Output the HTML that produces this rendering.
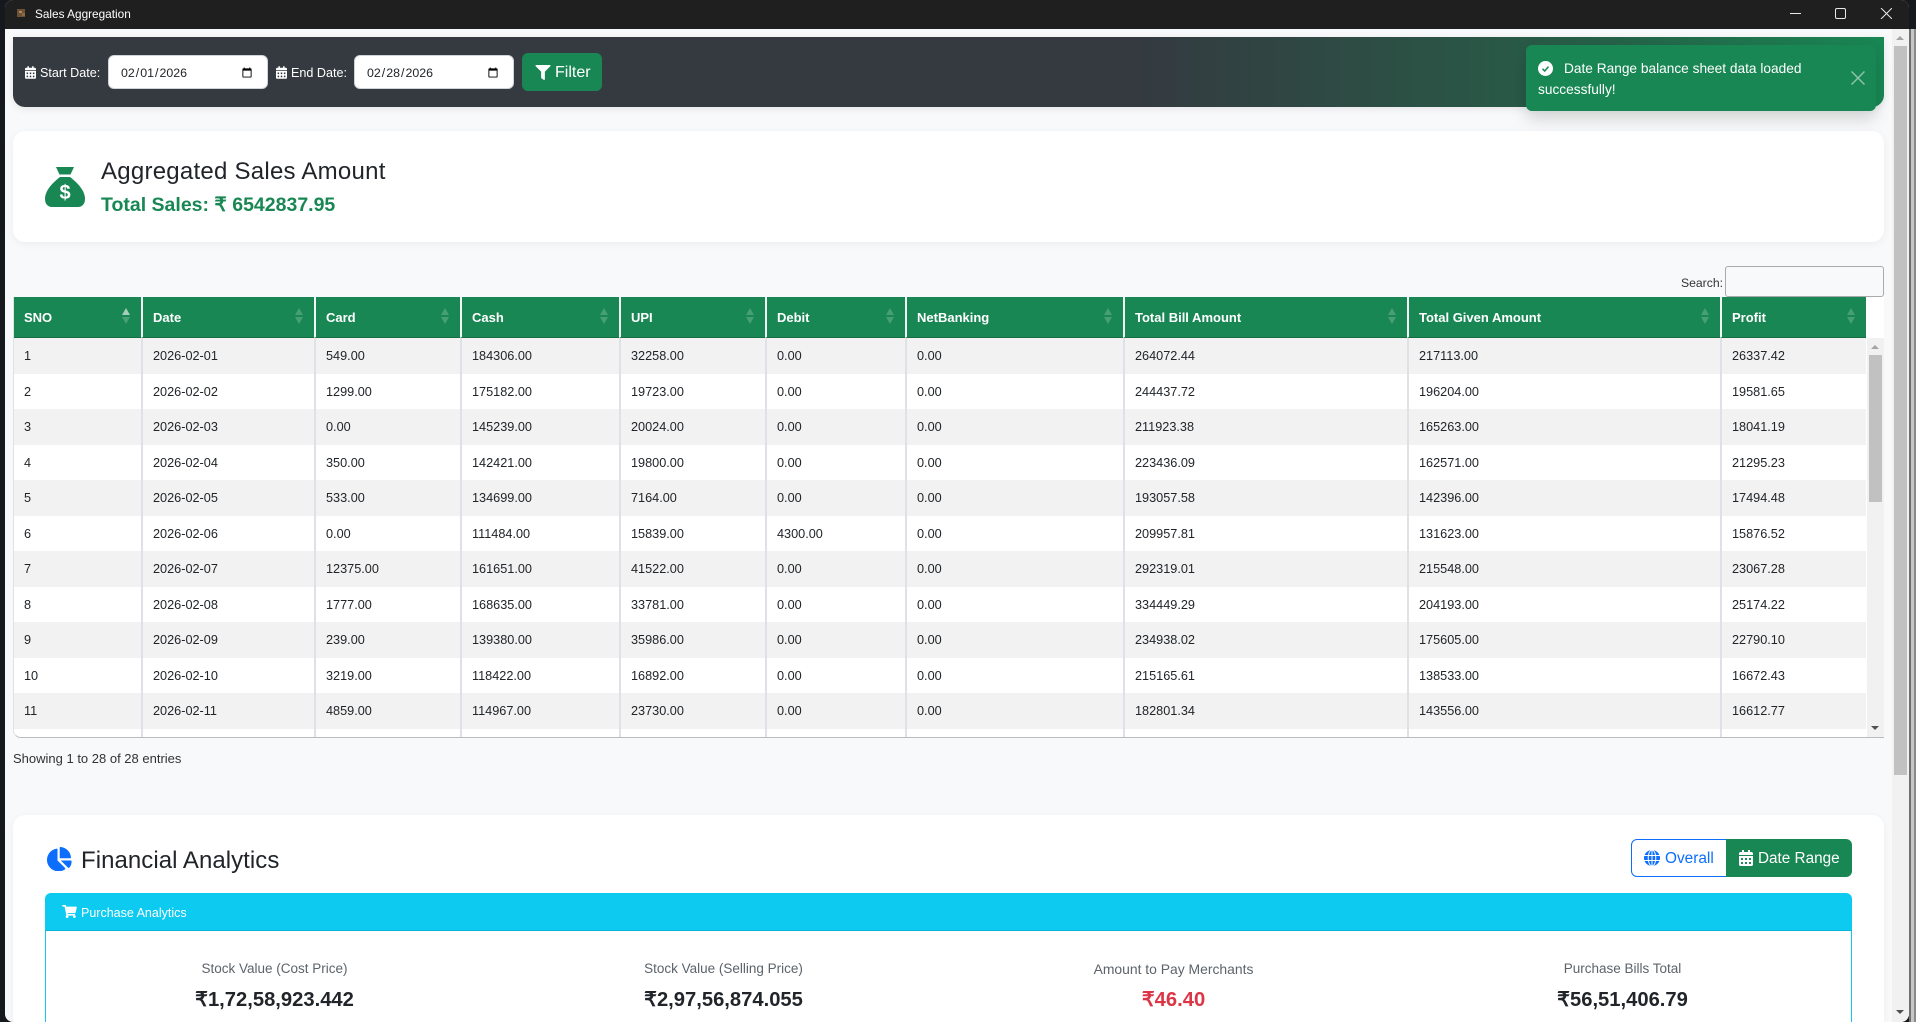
<!DOCTYPE html>
<html lang="en"><head><meta charset="utf-8"><title>Sales Aggregation</title>
<style>
*{box-sizing:border-box}
html,body{margin:0;padding:0;width:1916px;height:1022px;overflow:hidden;background:#15181c;font-family:"Liberation Sans",sans-serif;color:#212529}
.abs,.t{position:absolute}
.t{white-space:nowrap;line-height:1}
#edge{position:absolute;left:1909px;top:29px;width:7px;height:993px;background:linear-gradient(90deg,#6f6f6f 0,#6f6f6f 2px,#c6c6c6 2px,#c6c6c6 5px,#8a8a8a 5px)}
#win{position:absolute;left:5px;top:0;width:1904px;height:1022px;background:#f8f9fa;border-radius:8px;overflow:hidden}
#stage{position:absolute;left:-5px;top:0;width:1916px;height:1022px;overflow:hidden}
#title{position:absolute;left:0;top:0;width:1916px;height:29px;background:#1f1f1f}
#bar{position:absolute;left:13px;top:37px;width:1871px;height:70px;border-radius:0 0 12px 12px;background:linear-gradient(90deg,#343a40 0,#343a40 60%,#266048 84.8%,#198754 100%);box-shadow:0 2px 8px rgba(0,0,0,.08)}
input[type=date]{position:absolute;top:55px;width:160px;height:34px;border:1px solid #ced4da;border-radius:6px;background:#fff;padding:2px 12px 0 11px;font:12.4px "Liberation Sans",sans-serif;color:#212529;margin:0}
#btn{position:absolute;left:522px;top:53px;width:80px;height:38px;background:#198754;border-radius:6px}
#sales{position:absolute;left:13px;top:131px;width:1871px;height:111px;background:#fff;border-radius:12px;box-shadow:0 2px 8px rgba(0,0,0,.05)}
#wrap{position:absolute;left:13px;top:297px;width:1871px;height:441px;overflow:hidden;border-left:1px solid #dee2e6;border-bottom:1px solid #b9bbbe;border-radius:0 0 0 8px;background:#fff}
table{border-collapse:separate;border-spacing:0;table-layout:fixed;width:1852px;font-size:12.7px}
th{background:#198754;color:#fff;height:41px;text-align:left;padding:1px 0 0 10px;border-left:2px solid #f3f6f5;border-bottom:1px solid #146c43;font-weight:bold;position:relative;font-size:13px}
td{height:35.5px;padding:1px 0 0 10px;border-left:2px solid #dee2e6;white-space:nowrap;color:#212529}
th:first-child,td:first-child{border-left:0}
tbody tr:nth-child(odd) td{background:#f2f2f2}
tbody tr:nth-child(even) td{background:#fff}
th i{position:absolute;right:11px;width:0;height:0;border-left:4px solid transparent;border-right:4px solid transparent;opacity:.2}
th i.u{top:11px;border-bottom:7px solid #fff}
th i.d{top:20px;border-top:7px solid #fff}
th i.on{opacity:.6}
#itrack{position:absolute;left:1867px;top:338px;width:17px;height:399px;background:#f1f1f1}
#ithumb{position:absolute;left:1869px;top:355px;width:13px;height:147px;background:#c1c1c1}
#mtrack{position:absolute;left:1892px;top:29px;width:17px;height:993px;background:#f1f1f1}
#mthumb{position:absolute;left:1894px;top:46px;width:13px;height:729px;background:#c1c1c1}
.ar{position:absolute;width:0;height:0;border-left:4px solid transparent;border-right:4px solid transparent}
.ar.up{border-bottom:4px solid #a3a3a3}
.ar.dn{border-top:4px solid #505050}
#fin{position:absolute;left:13px;top:815px;width:1871px;height:207px;background:#fff;border-radius:12px 12px 0 0;box-shadow:0 2px 8px rgba(0,0,0,.05)}
#ov{position:absolute;left:1631px;top:839px;width:96px;height:38px;border:1px solid #0d6efd;border-radius:6px 0 0 6px;background:#fff}
#dr{position:absolute;left:1726px;top:839px;width:126px;height:38px;background:#198754;border-radius:0 6px 6px 0}
#ph{position:absolute;left:45px;top:893px;width:1807px;height:38px;background:#0dcaf0;border-radius:6px 6px 0 0;border-bottom:1px solid #0bb3d6}
#pb{position:absolute;left:45px;top:931px;width:1807px;height:91px;border-left:1px solid #0dcaf0;border-right:1px solid #0dcaf0;background:#fff}
.lab{position:absolute;top:962px;width:449px;text-align:center;font-size:13.5px;line-height:14px;color:#5c636a;white-space:nowrap}
.val{position:absolute;top:989px;width:449px;text-align:center;font-size:20.2px;line-height:22px;font-weight:bold;color:#212529;white-space:nowrap}
#toast{position:absolute;left:1526px;top:45px;width:350px;height:66px;background:#198754;border-radius:6px;box-shadow:0 8px 16px rgba(0,0,0,.15)}
</style></head><body>
<div id="edge"></div>
<div id="win"><div id="stage">

<div id="title"></div>
<svg class="abs" style="left:16px;top:8px" width="10" height="11" viewBox="0 0 10 11"><rect x="1" y="1" width="8" height="8" fill="#6d5036"/><rect x="3" y="3" width="3" height="2" fill="#b08a5a"/><rect x="6" y="5" width="3" height="3" fill="#8c6a40"/></svg>
<div class="t" style="left:35px;top:8px;font-size:11.8px;color:#fff;line-height:13px">Sales Aggregation</div>
<svg class="abs" style="left:1790px;top:8px" width="102" height="11" viewBox="0 0 102 11" fill="none" stroke="#e8e8e8" stroke-width="1"><path d="M0 5.500H11"/><rect x="45.500" y="0.500" width="10" height="10" rx="1.500"/><path d="M91 0L102 11M102 0L91 11"/></svg>

<div id="bar"></div>
<svg class="abs" style="left:25px;top:66px" width="11" height="13" viewBox="0 0 448 512"><path fill="#fff" d="M0 464c0 26.500 21.500 48 48 48h352c26.500 0 48-21.500 48-48V192H0v272zm320-196c0-6.600 5.400-12 12-12h40c6.600 0 12 5.400 12 12v40c0 6.600-5.400 12-12 12h-40c-6.600 0-12-5.400-12-12v-40zm0 128c0-6.600 5.400-12 12-12h40c6.600 0 12 5.400 12 12v40c0 6.600-5.400 12-12 12h-40c-6.600 0-12-5.400-12-12v-40zM192 268c0-6.600 5.400-12 12-12h40c6.600 0 12 5.400 12 12v40c0 6.600-5.400 12-12 12h-40c-6.600 0-12-5.400-12-12v-40zm0 128c0-6.600 5.400-12 12-12h40c6.600 0 12 5.400 12 12v40c0 6.600-5.400 12-12 12h-40c-6.600 0-12-5.400-12-12v-40zM64 268c0-6.600 5.400-12 12-12h40c6.600 0 12 5.400 12 12v40c0 6.600-5.400 12-12 12H76c-6.600 0-12-5.400-12-12v-40zm0 128c0-6.600 5.400-12 12-12h40c6.600 0 12 5.400 12 12v40c0 6.600-5.400 12-12 12H76c-6.600 0-12-5.400-12-12v-40zM400 64h-48V16c0-8.800-7.200-16-16-16h-32c-8.800 0-16 7.200-16 16v48H160V16c0-8.800-7.200-16-16-16h-32c-8.800 0-16 7.200-16 16v48H48C21.500 64 0 85.500 0 112v48h448v-48c0-26.500-21.500-48-48-48z"/></svg>
<div class="t" style="left:40px;top:66px;font-size:12.6px;line-height:15px;color:#fff">Start Date:</div>
<input type="date" value="2026-02-01" style="left:108px">
<svg class="abs" style="left:276px;top:66px" width="11" height="13" viewBox="0 0 448 512"><path fill="#fff" d="M0 464c0 26.500 21.500 48 48 48h352c26.500 0 48-21.500 48-48V192H0v272zm320-196c0-6.600 5.400-12 12-12h40c6.600 0 12 5.400 12 12v40c0 6.600-5.400 12-12 12h-40c-6.600 0-12-5.400-12-12v-40zm0 128c0-6.600 5.400-12 12-12h40c6.600 0 12 5.400 12 12v40c0 6.600-5.400 12-12 12h-40c-6.600 0-12-5.400-12-12v-40zM192 268c0-6.600 5.400-12 12-12h40c6.600 0 12 5.400 12 12v40c0 6.600-5.400 12-12 12h-40c-6.600 0-12-5.400-12-12v-40zm0 128c0-6.600 5.400-12 12-12h40c6.600 0 12 5.400 12 12v40c0 6.600-5.400 12-12 12h-40c-6.600 0-12-5.400-12-12v-40zM64 268c0-6.600 5.400-12 12-12h40c6.600 0 12 5.400 12 12v40c0 6.600-5.400 12-12 12H76c-6.600 0-12-5.400-12-12v-40zm0 128c0-6.600 5.400-12 12-12h40c6.600 0 12 5.400 12 12v40c0 6.600-5.400 12-12 12H76c-6.600 0-12-5.400-12-12v-40zM400 64h-48V16c0-8.800-7.200-16-16-16h-32c-8.800 0-16 7.200-16 16v48H160V16c0-8.800-7.200-16-16-16h-32c-8.800 0-16 7.200-16 16v48H48C21.500 64 0 85.500 0 112v48h448v-48c0-26.500-21.500-48-48-48z"/></svg>
<div class="t" style="left:291px;top:66px;font-size:12.6px;line-height:15px;color:#fff">End Date:</div>
<input type="date" value="2026-02-28" style="left:354px">
<div id="btn"></div>
<svg class="abs" style="left:535px;top:65px" width="16" height="15" viewBox="0 0 512 512"><path fill="#fff" d="M487.976 0H24.028C2.710 0-8.047 25.866 7.058 40.971L192 225.941V432c0 7.831 3.821 15.170 10.237 19.662l80 55.980C298.020 518.690 320 507.493 320 487.980V225.941l184.947-184.970C520.021 25.896 509.338 0 487.976 0z"/></svg>
<div class="t" style="left:555px;top:64px;font-size:16px;line-height:17px;color:#fff">Filter</div>

<div id="sales"></div>
<svg class="abs" style="left:45px;top:167px" width="40" height="40" viewBox="0 0 40 40"><path fill="#198754" d="M11 0H29L25.500 7.500H14.500Z"/><path fill="#198754" d="M15 10H25C30 14 40 22 40 32C40 37 37 40 33 40H7C3 40 0 37 0 32C0 22 10 14 15 10Z"/><text x="20" y="32" text-anchor="middle" font-family="Liberation Sans" font-weight="bold" font-size="20" fill="#fff">$</text></svg>
<div class="t" style="left:101px;top:158px;font-size:24px;line-height:27px;letter-spacing:.25px;color:#212529">Aggregated Sales Amount</div>
<div class="t" style="left:101px;top:194px;font-size:19.5px;line-height:22px;font-weight:bold;color:#198754">Total Sales: ₹ 6542837.95</div>

<div class="t" style="left:1681px;top:276px;font-size:12.2px;line-height:14px;color:#333">Search:</div>
<div class="abs" style="left:1725px;top:266px;width:159px;height:31px;border:1px solid #aaa;border-radius:3px;background:#f8f9fa"></div>

<div id="wrap">
<table>
<colgroup><col style="width:127px"><col style="width:173px"><col style="width:146px"><col style="width:159px"><col style="width:146px"><col style="width:140px"><col style="width:218px"><col style="width:284px"><col style="width:313px"><col style="width:146px"></colgroup>
<thead><tr>
<th>SNO<i class="u on"></i><i class="d"></i></th><th>Date<i class="u"></i><i class="d"></i></th><th>Card<i class="u"></i><i class="d"></i></th><th>Cash<i class="u"></i><i class="d"></i></th><th>UPI<i class="u"></i><i class="d"></i></th><th>Debit<i class="u"></i><i class="d"></i></th><th>NetBanking<i class="u"></i><i class="d"></i></th><th>Total Bill Amount<i class="u"></i><i class="d"></i></th><th>Total Given Amount<i class="u"></i><i class="d"></i></th><th>Profit<i class="u"></i><i class="d"></i></th>
</tr></thead>
<tbody>
<tr><td>1</td><td>2026-02-01</td><td>549.00</td><td>184306.00</td><td>32258.00</td><td>0.00</td><td>0.00</td><td>264072.44</td><td>217113.00</td><td>26337.42</td></tr>
<tr><td>2</td><td>2026-02-02</td><td>1299.00</td><td>175182.00</td><td>19723.00</td><td>0.00</td><td>0.00</td><td>244437.72</td><td>196204.00</td><td>19581.65</td></tr>
<tr><td>3</td><td>2026-02-03</td><td>0.00</td><td>145239.00</td><td>20024.00</td><td>0.00</td><td>0.00</td><td>211923.38</td><td>165263.00</td><td>18041.19</td></tr>
<tr><td>4</td><td>2026-02-04</td><td>350.00</td><td>142421.00</td><td>19800.00</td><td>0.00</td><td>0.00</td><td>223436.09</td><td>162571.00</td><td>21295.23</td></tr>
<tr><td>5</td><td>2026-02-05</td><td>533.00</td><td>134699.00</td><td>7164.00</td><td>0.00</td><td>0.00</td><td>193057.58</td><td>142396.00</td><td>17494.48</td></tr>
<tr><td>6</td><td>2026-02-06</td><td>0.00</td><td>111484.00</td><td>15839.00</td><td>4300.00</td><td>0.00</td><td>209957.81</td><td>131623.00</td><td>15876.52</td></tr>
<tr><td>7</td><td>2026-02-07</td><td>12375.00</td><td>161651.00</td><td>41522.00</td><td>0.00</td><td>0.00</td><td>292319.01</td><td>215548.00</td><td>23067.28</td></tr>
<tr><td>8</td><td>2026-02-08</td><td>1777.00</td><td>168635.00</td><td>33781.00</td><td>0.00</td><td>0.00</td><td>334449.29</td><td>204193.00</td><td>25174.22</td></tr>
<tr><td>9</td><td>2026-02-09</td><td>239.00</td><td>139380.00</td><td>35986.00</td><td>0.00</td><td>0.00</td><td>234938.02</td><td>175605.00</td><td>22790.10</td></tr>
<tr><td>10</td><td>2026-02-10</td><td>3219.00</td><td>118422.00</td><td>16892.00</td><td>0.00</td><td>0.00</td><td>215165.61</td><td>138533.00</td><td>16672.43</td></tr>
<tr><td>11</td><td>2026-02-11</td><td>4859.00</td><td>114967.00</td><td>23730.00</td><td>0.00</td><td>0.00</td><td>182801.34</td><td>143556.00</td><td>16612.77</td></tr>
<tr><td style="color:#fff">12</td><td></td><td></td><td></td><td></td><td></td><td></td><td></td><td></td><td></td></tr>
</tbody></table>
</div>
<div id="itrack"></div><div id="ithumb"></div>
<div class="ar up" style="left:1871px;top:345px"></div>
<div class="ar dn" style="left:1871px;top:726px"></div>

<div class="t" style="left:13px;top:751px;font-size:13px;line-height:15px;color:#333">Showing 1 to 28 of 28 entries</div>

<div id="fin"></div>
<svg class="abs" style="left:46px;top:847px" width="26" height="24" viewBox="0 0 544 512"><path fill="#0d6efd" d="M527 288H310.200l155.300 155.300c5.900 5.900 15.600 6.400 21.800.7 38-35.900 52-84.200 54-138.600.3-9.300-6.400-17.400-15.200-17.400zM528.500 224.100C520.500 103.200 424.800 7.500 303.900-.5c-9.200-.6-16.900 7.100-16.900 16.300V240h225.200c9.200 0 16.900-7.700 16.300-15.900zM240 288V50.700c0-8.800-8.100-16.500-17.400-15.200C103.200 52.400 11.400 158.300 16 285.200c4.700 130.400 117 235.900 247.500 234.300 51.300-.6 98.700-17.600 137.300-45.900 8-5.800 8.500-17.600 1.500-24.600L240 288z"/></svg>
<div class="t" style="left:81px;top:847px;font-size:24px;line-height:27px;letter-spacing:.05px;color:#212529">Financial Analytics</div>

<div id="ov"></div>
<svg class="abs" style="left:1644px;top:850px" width="16" height="16" viewBox="0 0 16 16"><circle cx="8" cy="8" r="8" fill="#0d6efd"/><path d="M0 5.500H16M0 10.500H16M8 0V16" stroke="#fff" stroke-width="1" fill="none"/><ellipse cx="8" cy="8" rx="3.800" ry="8" fill="none" stroke="#fff" stroke-width="1"/></svg>
<div class="t" style="left:1665px;top:850px;font-size:15.4px;line-height:17px;color:#0d6efd">Overall</div>
<div id="dr"></div>
<svg class="abs" style="left:1739px;top:850px" width="14" height="16" viewBox="0 0 448 512"><path fill="#fff" d="M0 464c0 26.500 21.500 48 48 48h352c26.500 0 48-21.500 48-48V192H0v272zm320-196c0-6.600 5.400-12 12-12h40c6.600 0 12 5.400 12 12v40c0 6.600-5.400 12-12 12h-40c-6.600 0-12-5.400-12-12v-40zm0 128c0-6.600 5.400-12 12-12h40c6.600 0 12 5.400 12 12v40c0 6.600-5.400 12-12 12h-40c-6.600 0-12-5.400-12-12v-40zM192 268c0-6.600 5.400-12 12-12h40c6.600 0 12 5.400 12 12v40c0 6.600-5.400 12-12 12h-40c-6.600 0-12-5.400-12-12v-40zm0 128c0-6.600 5.400-12 12-12h40c6.600 0 12 5.400 12 12v40c0 6.600-5.400 12-12 12h-40c-6.600 0-12-5.400-12-12v-40zM64 268c0-6.600 5.400-12 12-12h40c6.600 0 12 5.400 12 12v40c0 6.600-5.400 12-12 12H76c-6.600 0-12-5.400-12-12v-40zm0 128c0-6.600 5.400-12 12-12h40c6.600 0 12 5.400 12 12v40c0 6.600-5.400 12-12 12H76c-6.600 0-12-5.400-12-12v-40zM400 64h-48V16c0-8.800-7.200-16-16-16h-32c-8.800 0-16 7.200-16 16v48H160V16c0-8.800-7.200-16-16-16h-32c-8.800 0-16 7.200-16 16v48H48C21.500 64 0 85.500 0 112v48h448v-48c0-26.500-21.500-48-48-48z"/></svg>
<div class="t" style="left:1758px;top:850px;font-size:15.3px;line-height:17px;color:#fff">Date Range</div>

<div id="ph"></div>
<svg class="abs" style="left:62px;top:905px" width="15" height="13" viewBox="0 0 576 512"><path fill="#fff" d="M528.120 301.319l47.273-208C578.806 78.301 567.391 64 551.990 64H159.208l-9.166-44.810C147.758 8.021 137.930 0 126.529 0H24C10.745 0 0 10.745 0 24v16c0 13.255 10.745 24 24 24h69.883l70.248 343.435C147.325 417.100 136 435.222 136 456c0 30.928 25.072 56 56 56s56-25.072 56-56c0-15.674-6.447-29.835-16.824-40h209.647C430.447 426.165 424 440.326 424 456c0 30.928 25.072 56 56 56s56-25.072 56-56c0-22.172-12.888-41.332-31.579-50.405l5.517-24.276c3.413-15.018-8.002-29.319-23.403-29.319H218.117l-6.545-32h293.145c11.206 0 20.920-7.754 23.403-18.681z"/></svg>
<div class="t" style="left:81px;top:906px;font-size:12.5px;line-height:15px;color:#fff">Purchase Analytics</div>
<div id="pb"></div>
<div class="lab" style="left:50px">Stock Value (Cost Price)</div>
<div class="val" style="left:50px">₹1,72,58,923.442</div>
<div class="lab" style="left:499px">Stock Value (Selling Price)</div>
<div class="val" style="left:499px">₹2,97,56,874.055</div>
<div class="lab" style="left:949px;font-size:13.9px">Amount to Pay Merchants</div>
<div class="val" style="left:949px;color:#dc3545">₹46.40</div>
<div class="lab" style="left:1398px">Purchase Bills Total</div>
<div class="val" style="left:1398px">₹56,51,406.79</div>

<div id="mtrack"></div><div id="mthumb"></div>
<div class="ar up" style="left:1896px;top:36px"></div>
<div class="ar dn" style="left:1896px;top:1010px"></div>

<div id="toast"></div>
<svg class="abs" style="left:1538px;top:61px" width="15" height="15" viewBox="0 0 15 15"><circle cx="7.500" cy="7.500" r="7.500" fill="#fff"/><path d="M4.500 7.800L6.700 10L10.500 5.600" fill="none" stroke="#198754" stroke-width="1.500"/></svg>
<div class="t" style="left:1564px;top:61px;font-size:13.7px;line-height:16px;color:#fff">Date Range balance sheet data loaded</div>
<div class="t" style="left:1538px;top:82px;font-size:13.7px;line-height:16px;color:#fff">successfully!</div>
<svg class="abs" style="left:1851px;top:71px" width="14" height="14" viewBox="0 0 14 14"><path d="M0.500 0.500L13.500 13.500M13.500 0.500L0.500 13.500" stroke="#fff" stroke-opacity=".5" stroke-width="1.500" fill="none"/></svg>

</div></div>
</body></html>
